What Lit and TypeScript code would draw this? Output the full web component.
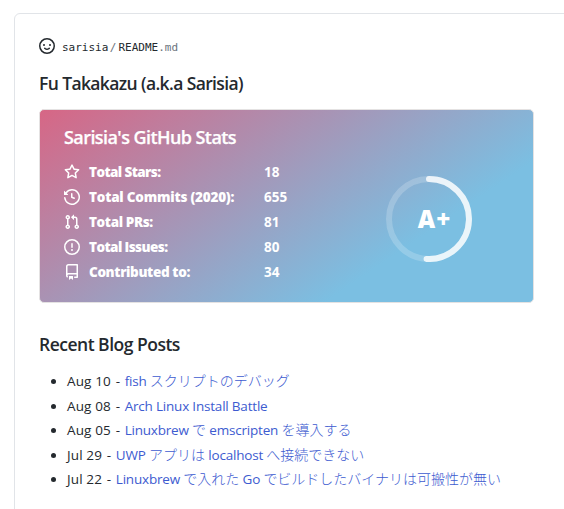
import { LitElement, html, css, svg } from "lit";
import { customElement, property } from "lit/decorators.js";

const ICONS: Record<string, string> = {
  star: "M8 .25a.75.75 0 01.673.418l1.882 3.815 4.21.612a.75.75 0 01.416 1.279l-3.046 2.97.719 4.192a.75.75 0 01-1.088.791L8 12.347l-3.766 1.98a.75.75 0 01-1.088-.79l.72-4.194L.818 6.374a.75.75 0 01.416-1.28l4.21-.611L7.327.668A.75.75 0 018 .25zm0 2.445L6.615 5.5a.75.75 0 01-.564.41l-3.097.45 2.24 2.184a.75.75 0 01.216.664l-.528 3.084 2.769-1.456a.75.75 0 01.698 0l2.77 1.456-.53-3.084a.75.75 0 01.216-.664l2.24-2.183-3.096-.45a.75.75 0 01-.564-.41L8 2.694v.001z",
  commits: "M1.643 3.143L.427 1.927A.25.25 0 000 2.104V5.75c0 .138.112.25.25.25h3.646a.25.25 0 00.177-.427L2.715 4.215a6.5 6.5 0 11-1.18 4.458.75.75 0 10-1.493.154 8.001 8.001 0 101.6-5.684zM7.75 4a.75.75 0 01.75.75v2.992l2.028.812a.75.75 0 01-.557 1.392l-2.5-1A.75.75 0 017 8.25v-3.5A.75.75 0 017.75 4z",
  prs: "M7.177 3.073L9.573.677A.25.25 0 0110 .854v4.792a.25.25 0 01-.427.177L7.177 3.427a.25.25 0 010-.354zM3.75 2.5a.75.75 0 100 1.5.75.75 0 000-1.5zm-2.25.75a2.25 2.25 0 113 2.122v5.256a2.251 2.251 0 11-1.5 0V5.372A2.25 2.25 0 011.5 3.25zM11 2.5h-1V4h1a1 1 0 011 1v5.628a2.251 2.251 0 101.5 0V5A2.5 2.5 0 0011 2.5zm1 10.25a.75.75 0 111.5 0 .75.75 0 01-1.5 0zM3.75 12a.75.75 0 100 1.5.75.75 0 000-1.5z",
  issues: "M8 1.5a6.5 6.5 0 100 13 6.5 6.5 0 000-13zM0 8a8 8 0 1116 0A8 8 0 010 8zm9 3a1 1 0 11-2 0 1 1 0 012 0zm-.25-6.25a.75.75 0 00-1.5 0v3.5a.75.75 0 001.5 0v-3.5z",
  repo: "M2 2.5A2.5 2.5 0 014.5 0h8.75a.75.75 0 01.75.75v12.5a.75.75 0 01-.75.75h-2.5a.75.75 0 110-1.5h1.75v-2h-8a1 1 0 00-.714 1.7.75.75 0 01-1.072 1.05A2.495 2.495 0 012 11.5v-9zm10.5-1V9h-8c-.356 0-.694.074-1 .208V2.5a1 1 0 011-1h8zM5 12.25v3.25a.25.25 0 00.4.2l1.45-1.087a.25.25 0 01.3 0L8.6 15.7a.25.25 0 00.4-.2v-3.25a.25.25 0 00-.25-.25h-3.5a.25.25 0 00-.25.25z",
  smiley: "M1.5 8a6.5 6.5 0 1113 0 6.5 6.5 0 01-13 0zM8 0a8 8 0 100 16A8 8 0 008 0zM5 8a1 1 0 100-2 1 1 0 000 2zm7-1a1 1 0 11-2 0 1 1 0 012 0zM5.32 9.636a.75.75 0 011.038.175l.007.009c.103.118.22.222.35.31.264.178.683.37 1.285.37.602 0 1.02-.192 1.285-.371.13-.088.247-.192.35-.31l.007-.008a.75.75 0 111.222.87l-.614-.431c.614.43.614.431.613.431v.001l-.001.002-.002.003-.005.007-.014.019a1.984 1.984 0 01-.184.213c-.16.166-.338.316-.53.445-.63.418-1.37.638-2.127.629-.946 0-1.652-.308-2.126-.63a3.331 3.331 0 01-.715-.657l-.014-.02-.005-.006-.002-.003v-.002h-.001l.613-.432-.614.43a.75.75 0 01.183-1.044h.001z",
};

const icon = (name: string) =>
  html`<svg class="icon" width="16" height="16" viewBox="0 0 16 16" fill="currentColor" fill-rule="evenodd">
    ${svg`<path d=${ICONS[name]}></path>`}
  </svg>`;

// Kana and kanji runs are set slightly larger than the Latin text around them.
const mixed = (text: string) =>
  text
    .split(/([\u3040-\u30ff\u4e00-\u9fff]+)/)
    .map((run, i) => (i % 2 ? html`<span class="jp">${run}</span>` : run));

interface Stat { icon: string; label: string; value: number; tracking: number; }
interface Post { date: string; title: string; }

@customElement("stats-card")
export class StatsCard extends LitElement {
  @property({ attribute: false }) stats: Stat[] = [];

  static styles = css`
    :host { display: grid; width: 495px; height: 195px; color: #fff; font-family: "Open Sans", "Noto Sans", sans-serif; }
    .backdrop, .content { grid-area: 1 / 1; }
    .content { display: grid; grid-template-columns: 322px 86px; grid-template-rows: 39px 1fr; padding: 16px 0 0 25px; }
    .title { grid-column: 1 / -1; margin: 0; line-height: 25px; font-size: 18px; font-weight: 600; letter-spacing: -0.57px; -webkit-text-stroke: 0.25px #fff; }
    .rows { display: flex; flex-direction: column; }
    .row { display: grid; grid-template-columns: 25px 175px auto; height: 25px; line-height: 16px; font-size: 13.5px; font-weight: 800; }
    .value { font-weight: 700; }
    .icon { display: block; }
    .rank { display: grid; width: 86px; height: 86px; margin-top: 11.5px; place-items: center; }
    .ring, .grade { grid-area: 1 / 1; }
    .grade { padding-left: 11px; font-size: 24px; line-height: 26px; font-weight: 800; letter-spacing: 1px; }
  `;

  render() {
    return html`
      <svg class="backdrop" width="495" height="195" viewBox="0 0 495 195">
        <defs>
          <linearGradient id="bg" gradientTransform="rotate(30)">
            <stop offset="0" stop-color="#d76685"></stop>
            <stop offset="1" stop-color="#7bbfe2"></stop>
          </linearGradient>
        </defs>
        <rect x="0.5" y="0.5" width="494" height="193" rx="4.5" fill="url(#bg)" stroke="#e4e2e2"></rect>
      </svg>
      <div class="content">
        <h3 class="title">Sarisia's GitHub Stats</h3>
        <div class="rows">
          ${this.stats.map((s) => html`
            <div class="row">
              ${icon(s.icon)}<span style="letter-spacing:${s.tracking}px">${s.label}:</span><span class="value">${s.value}</span>
            </div>`)}
        </div>
        <div class="rank">
          <svg class="ring" width="86" height="86" viewBox="-43 -43 86 86" fill="none" stroke="#fff" stroke-width="6">
            <circle r="40" opacity="0.2"></circle>
            <path d="M0-40A40 40 0 1 1-2.4 39.93" stroke-linecap="round" opacity="0.8"></path>
          </svg>
          <span class="grade">A+</span>
        </div>
      </div>`;
  }
}

@customElement("app-root")
export class AppRoot extends LitElement {
  private stats: Stat[] = [
    { icon: "star", label: "Total Stars", value: 18, tracking: -0.6 },
    { icon: "commits", label: "Total Commits (2020)", value: 655, tracking: -0.22 },
    { icon: "prs", label: "Total PRs", value: 81, tracking: -0.38 },
    { icon: "issues", label: "Total Issues", value: 80, tracking: -0.58 },
    { icon: "repo", label: "Contributed to", value: 34, tracking: -0.37 },
  ];

  private posts: Post[] = [
    { date: "Aug 10", title: "fish スクリプトのデバッグ" },
    { date: "Aug 08", title: "Arch Linux Install Battle" },
    { date: "Aug 05", title: "Linuxbrew で emscripten を導入する" },
    { date: "Jul 29", title: "UWP アプリは localhost へ接続できない" },
    { date: "Jul 22", title: "Linuxbrew で入れた Go でビルドしたバイナリは可搬性が無い" },
  ];

  static styles = css`
    :host { display: block; box-sizing: border-box; height: 509px; overflow: hidden; padding: 13px 0 0 14px; background: #fff; color: #24292e; font-family: "Open Sans", "Noto Sans CJK JP", sans-serif; }
    .panel { box-sizing: border-box; width: 600px; height: 540px; padding: 24px 0 0 24px; border: 1px solid #e1e4e8; border-radius: 6px; }
    .path { display: flex; align-items: center; height: 16px; font-family: "DejaVu Sans Mono", monospace; font-size: 11px; }
    .file { display: flex; padding-top: 2px; }
    .icon { display: block; margin-right: 7px; }
    .slash { margin: 0 2px 0 1.5px; color: #6a737d; }
    .ext { color: #6a737d; }
    .heading { margin: 0; font-size: 17.5px; line-height: 22px; font-weight: 600; }
    .name { margin-top: 18px; letter-spacing: -0.62px; }
    .recent { margin-top: 29px; letter-spacing: -0.5px; }
    stats-card { margin-top: 15px; }
    .posts { margin: 16px 0 0; padding: 0 0 0 28px; font-size: 13.5px; line-height: 21px; }
    .post { height: 21px; margin-bottom: 3.5px; white-space: nowrap; letter-spacing: -0.2px; }
    .date { letter-spacing: 0.13px; }
    .dash { word-spacing: 1.5px; white-space: pre; }
    .link { color: #3d5bd0; text-decoration: none; }
    .jp { font-size: 14px; line-height: 1; letter-spacing: 0; font-weight: 300; }
  `;

  render() {
    return html`
      <article class="panel">
        <div class="path">
          ${icon("smiley")}
          <div class="file"><span>sarisia</span><span class="slash">/</span><span>README</span><span class="ext">.md</span></div>
        </div>
        <h3 class="heading name">Fu Takakazu (a.k.a Sarisia)</h3>
        <stats-card .stats=${this.stats}></stats-card>
        <h3 class="heading recent">Recent Blog Posts</h3>
        <ul class="posts">
          ${this.posts.map((p) => html`<li class="post"><span class="date">${p.date}</span><span class="dash"> - </span><a class="link" href="#">${mixed(p.title)}</a></li>`)}
        </ul>
      </article>`;
  }
}
